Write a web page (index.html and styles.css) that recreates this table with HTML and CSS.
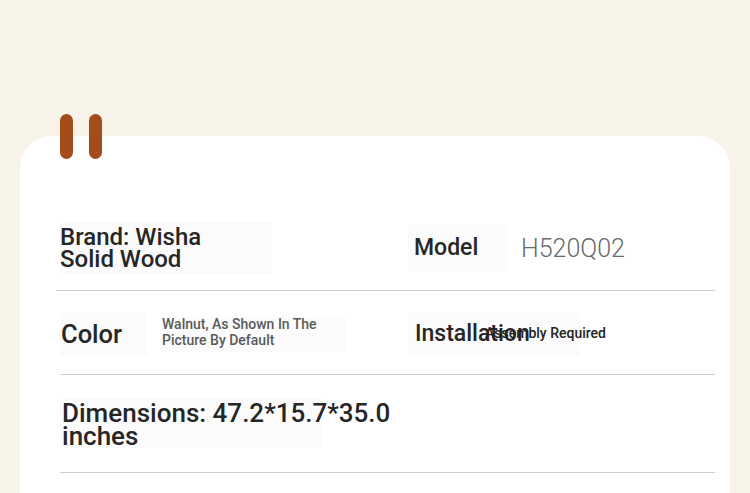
FILE: index.html
```html
<!DOCTYPE html>
<html>
<head>
<meta charset="utf-8">
<link rel="stylesheet" href="styles.css">
</head>
<body>
<div class="page">
  <div class="tabs">
    <span class="tab"></span>
    <span class="tab"></span>
  </div>
  <div class="card">
    <div class="row row-first">
      <div class="cell">
        <div class="box box-brand"><span class="label label-wrap">Brand: Wisha<br>Solid Wood</span></div>
      </div>
      <div class="cell">
        <div class="box box-model"><span class="label label-model">Model</span></div>
        <span class="value-lg">H520Q02</span>
      </div>
    </div>
    <div class="row row-second">
      <div class="cell">
        <div class="box box-color"><span class="label label-color">Color</span></div>
        <div class="box box-colorval"><span class="value-sm">Walnut, As Shown In The<br>Picture By Default</span></div>
      </div>
      <div class="cell">
        <div class="box box-install"><span class="label label-install">Installation</span><span class="value-dark">Assembly Required</span></div>
      </div>
    </div>
    <div class="row row-third">
      <div class="cell cell-full">
        <div class="box box-dim"><span class="label label-wrap label-dim">Dimensions: 47.2*15.7*35.0<br>inches</span></div>
      </div>
    </div>
  </div>
</div>
</body>
</html>
```

FILE: styles.css
```css
* { box-sizing: border-box; }
html, body {
  margin: 0;
  padding: 0;
  background: #f8f4ea;
  font-family: Roboto, "Liberation Sans", sans-serif;
}
.page {
  width: 750px;
  height: 493px;
  padding-top: 114px;
  overflow: hidden;
}
.tabs {
  display: flex;
  gap: 16px;
  margin-left: 60px;
  position: relative;
  z-index: 2;
}
.tab {
  display: block;
  width: 13px;
  height: 45px;
  border-radius: 7px;
  background: #a44c1b;
}
.card {
  margin: -23px 20px 0 20px;
  background: #ffffff;
  border-radius: 32px 32px 0 0;
  padding: 0 15px 40px 40px;
  height: 400px;
}
.row {
  display: grid;
  grid-template-columns: 348px 1fr;
  align-items: center;
  border-bottom: 1px solid #cfcfcf;
}
.row-first {
  padding-top: 86px;
  padding-bottom: 16px;
  margin-left: -4px;
  padding-left: 4px;
}
.row-second {
  padding-top: 21px;
  padding-bottom: 18px;
}
.row-third {
  padding-top: 23px;
  padding-bottom: 24px;
}
.cell {
  display: flex;
  align-items: center;
}
.cell-full { grid-column: 1 / 3; }
.box {
  background: #fbfbfb;
  display: flex;
  align-items: center;
}
.label {
  font-size: 24px;
  font-weight: 500;
  color: #262626;
  line-height: 22px;
  white-space: nowrap;
}
.label-wrap { display: block; }
.label-model { font-size: 23px; }
.label-color { font-size: 25.5px; }
.label-dim { font-size: 26px; line-height: 23px; padding-top: 3px; }
.box-brand { width: 212px; height: 52px; padding-left: 0; }
.box-model { width: 100px; height: 48px; padding-left: 6px; }
.value-lg {
  margin-left: 13px;
  font-size: 25px;
  font-weight: 300;
  color: #6a6a6a;
}
.box-color { width: 87px; height: 44px; padding-left: 1px; }
.box-colorval { width: 185px; height: 35px; margin-left: 13px; padding-left: 2px; padding-bottom: 4px; }
.value-sm {
  font-size: 14px;
  font-weight: 500;
  line-height: 16px;
  color: #5a5a5a;
}
.box-install { width: 172px; height: 43px; padding-left: 7px; }
.label-install {
  display: inline-block;
  width: 70px;
  font-size: 23px;
}
.value-dark {
  font-size: 14px;
  font-weight: 500;
  color: #222222;
  white-space: nowrap;
  position: relative;
  z-index: 1;
  margin-top: -3px;
}
.box-dim { width: 262px; height: 50px; padding-left: 2px; }
```
